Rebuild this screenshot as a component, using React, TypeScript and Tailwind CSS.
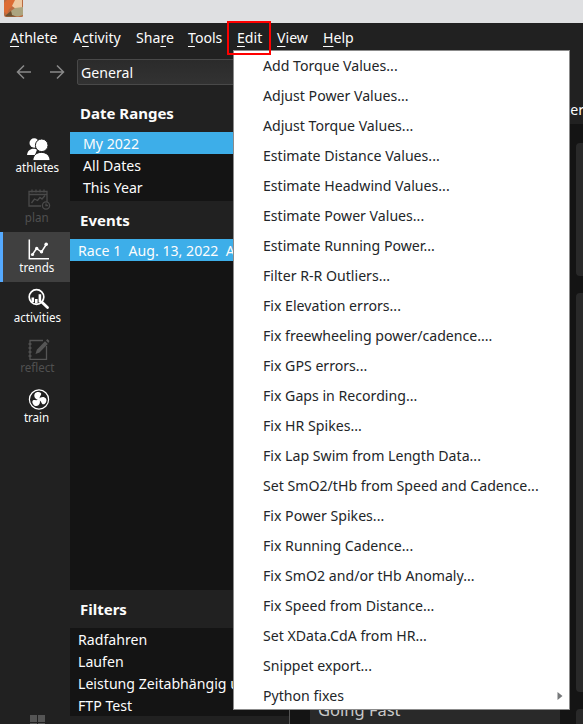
import React from "react";

const fixes = [
  "Add Torque Values...",
  "Adjust Power Values...",
  "Adjust Torque Values...",
  "Estimate Distance Values...",
  "Estimate Headwind Values...",
  "Estimate Power Values...",
  "Estimate Running Power...",
  "Filter R-R Outliers...",
  "Fix Elevation errors...",
  "Fix freewheeling power/cadence....",
  "Fix GPS errors...",
  "Fix Gaps in Recording...",
  "Fix HR Spikes...",
  "Fix Lap Swim from Length Data...",
  "Set SmO2/tHb from Speed and Cadence...",
  "Fix Power Spikes...",
  "Fix Running Cadence...",
  "Fix SmO2 and/or tHb Anomaly...",
  "Fix Speed from Distance...",
  "Set XData.CdA from HR...",
  "Snippet export...",
  "Python fixes",
];

// before, mnemonic, after
const menus: [string, string, string, string][] = [
  ["", "A", "thlete", "w-[63px]"],
  ["A", "c", "tivity", "w-[63px]"],
  ["Sha", "r", "e", "w-[52px]"],
  ["", "T", "ools", "w-[49px]"],
  ["", "E", "dit", "w-[40px]"],
  ["", "V", "iew", "w-[46px]"],
  ["", "H", "elp", "w-[40px]"],
];

function AthletesIcon() {
  return (
    <svg width="24" height="24" viewBox="0 0 24 24" fill="#fff">
      <circle cx="7.200" cy="6" r="4.700" />
      <path d="M0 18.100c.3-4 3-6.300 6.500-6.300 1.500 0 2.700.4 3.500 1L8 18.100z" />
      <g stroke="#212121" strokeWidth="1">
        <circle cx="14.700" cy="8.300" r="6.300" />
        <path d="M5.800 23.600c.2-5.200 3.600-8.200 8.600-8.200s8.500 3 8.700 8.200z" />
      </g>
    </svg>
  );
}

function PlanIcon() {
  return (
    <svg width="24" height="24" viewBox="0 0 24 24" fill="none" stroke="#4a4a4a" strokeWidth="1.300">
      <path d="M14 19H2V4.500h18V15M2 7.500h18M5 2.500v3M9 2.500v3M13 2.500v3M17 2.500v3" />
      <path d="M4.500 16l3-4 3 1.500 2.500-3 2 1.500 3-3.500" />
      <circle cx="19" cy="18.500" r="3.600" />
      <path d="M19 16.500v2h2" />
    </svg>
  );
}

function TrendsIcon() {
  return (
    <svg width="24" height="24" viewBox="0 0 24 24" fill="none" stroke="#fff" strokeWidth="1.500">
      <path d="M2.300 2.500v19.200H22" />
      <path d="M5.500 17.500l4-6 5 3.500 5-8" />
      <g fill="#fff" stroke="none">
        <circle cx="5.500" cy="17.500" r="1.600" />
        <circle cx="9.700" cy="11.500" r="1.700" />
        <circle cx="14.500" cy="14.800" r="1.700" />
        <circle cx="19.200" cy="7.300" r="1.800" />
      </g>
    </svg>
  );
}

function ActivitiesIcon() {
  return (
    <svg width="24" height="24" viewBox="0 0 24 24" fill="none" stroke="#fff">
      <circle cx="9.500" cy="10" r="7.300" strokeWidth="1.700" />
      <path d="M15 15.300l5.500 5.200" strokeWidth="2.800" strokeLinecap="round" />
      <path d="M5.800 15v-4.500M9.300 16.500v-4.500M12.900 15.500V7.300" strokeWidth="2.600" />
    </svg>
  );
}

function ReflectIcon() {
  return (
    <svg width="24" height="24" viewBox="0 0 24 24" fill="none" stroke="#555" strokeWidth="1.300">
      <path d="M16 3.500H3v18.800h16.500V9M1.500 7h3M1.500 11h3M1.500 15h3M1.500 19h3" />
      <path d="M8.500 17l1.300-4.200L18 4.300l2.800 2.700-8.300 8.500z" fill="#555" stroke="none" />
      <path d="M19 3.300l1.500-1.200 2 2L21.300 6z" fill="#555" stroke="none" />
    </svg>
  );
}

function TrainIcon() {
  const blade = "M12 12.500C8 12 6.600 8.800 7.600 6.500 8.700 4.400 12 4 13.600 5.300c1.200 1 .5 2.200-.3 3.200-.8 1.200-.8 2.300-.3 3.500z";
  return (
    <svg width="24" height="24" viewBox="0 0 24 24" fill="#fff">
      <circle cx="12" cy="12.500" r="9.600" fill="none" stroke="#fff" strokeWidth="1.200" />
      <g transform="translate(0 .5)">
        <path d={blade} />
        <path d={blade} transform="rotate(120 12 12)" />
        <path d={blade} transform="rotate(240 12 12)" />
      </g>
    </svg>
  );
}

function AppLogo() {
  return (
    <svg width="20" height="18" viewBox="0 0 20 18">
      <path d="M0 0h19v16q0 1-1.500 1H2Q0 17 0 15z" fill="#b96b41" />
      <path d="M3 0h8l-2 6-4 3-2 5-3-2V3z" fill="#dc6c35" />
      <path d="M11 0h7v8l-6 1-4-3z" fill="#eec9a2" />
      <path d="M7 11l4-3 8-1v8l-5 1.500-6-1z" fill="#aca47f" />
      <path d="M1 16c2-2 4-3 6-5l1 4 4 1.500H3z" fill="#6b5232" />
    </svg>
  );
}

function Arrow({ right = false }: { right?: boolean }) {
  return (
    <svg width="16" height="16" viewBox="0 0 16 16" fill="none" stroke="#898989" strokeWidth="1.500" className={right ? "rotate-180" : ""}>
      <path d="M15 8H2M8 1.500L1.500 8 8 14.500" />
    </svg>
  );
}

const views = [
  { name: "athletes", icon: <AthletesIcon /> },
  { name: "plan", icon: <PlanIcon />, dim: true },
  { name: "trends", icon: <TrendsIcon />, active: true },
  { name: "activities", icon: <ActivitiesIcon /> },
  { name: "reflect", icon: <ReflectIcon />, dim: true },
  { name: "train", icon: <TrainIcon /> },
];

function Heading({ children, className }: { children: React.ReactNode; className: string }) {
  return <h2 className={"shrink-0 bg-[#212121] pl-[10px] text-[15px] font-bold " + className}>{children}</h2>;
}

export default function App() {
  return (
    <div className="relative flex h-[724px] w-[583px] flex-col overflow-hidden bg-[#212121] font-['Noto_Sans',sans-serif] text-[14.13px] whitespace-nowrap text-[#fcfcfc]">
      <header className="h-[23px] shrink-0 bg-[#dfe0e2] pl-[4px]">
        <AppLogo />
      </header>

      <nav className="flex h-[28px] shrink-0 pl-[10px] leading-[30px]">
        {menus.map(([pre, key, post, width]) => (
          <span key={pre + key + post} className={"shrink-0 " + width}>
            {pre}
            <span className="underline decoration-1 underline-offset-[3px]">{key}</span>
            {post}
          </span>
        ))}
      </nav>

      <div className="flex h-[42px] shrink-0 items-center pl-[16px]">
        <Arrow />
        <span className="w-[17px]" />
        <Arrow right />
        <div className="ml-[12px] h-[26px] w-[220px] rounded-[2px] border border-[#494949] bg-linear-to-b from-[#2b2b2b] to-[#323232] pl-[3px] leading-[26px]">
          General
        </div>
      </div>

      <div className="flex min-h-0 flex-1">
        <aside className="flex w-[70px] shrink-0 flex-col pt-[39px]">
          {views.map((v) => (
            <div
              key={v.name}
              className={
                "flex h-[50px] shrink-0 flex-col items-center pt-[5px] leading-[14px] " +
                (v.active ? "border-l-[3px] border-[#55aaff] bg-[#404040] pl-px " : "pl-[4px] ") +
                (v.dim ? "text-[#505050]" : "")
              }
            >
              <span className="pl-[3px]">{v.icon}</span>
              <span className="origin-center scale-x-[0.935] text-[12.4px]">{v.name}</span>
            </div>
          ))}
          <div className="mt-auto ml-[30px] grid h-[9px] w-[15px] shrink-0 grid-cols-2 gap-px overflow-hidden">
            <i className="h-[7px] bg-[#555]" />
            <i className="h-[7px] bg-[#555]" />
            <i className="h-[7px] bg-[#555]" />
            <i className="h-[7px] bg-[#555]" />
          </div>
        </aside>

        <section className="flex w-[220px] shrink-0 flex-col overflow-hidden border-r border-[#555] bg-[#141414] leading-[24px]">
          <Heading className="h-[39px] leading-[40px]">Date Ranges</Heading>
          <ul className="h-[69px] shrink-0">
            <li className="h-[22px] bg-[#3daee9] pl-[13px]">My 2022</li>
            <li className="h-[22px] pl-[13px]">All Dates</li>
            <li className="h-[22px] pl-[13px]">This Year</li>
          </ul>
          <Heading className="h-[38px] leading-[38px]">Events</Heading>
          <div className="h-[351px] shrink-0">
            <p className="h-[22px] bg-[#3daee9] pl-[8px] whitespace-pre">Race 1  Aug. 13, 2022  A</p>
          </div>
          <Heading className="h-[38px] leading-[39px]">Filters</Heading>
          <ul className="h-[88px] shrink-0 pl-[8px]">
            <li className="h-[22px]">Radfahren</li>
            <li className="h-[22px]">Laufen</li>
            <li className="h-[22px]">Leistung Zeitabhängig und</li>
            <li className="h-[22px]">FTP Test</li>
          </ul>
          <div className="flex-1 bg-[#212121]" />
        </section>

        <main className="flex min-w-0 flex-1 flex-col bg-[#141414]">
          <div className="flex h-[31px] shrink-0 justify-end bg-[#212121] leading-[34px]">
            <span className="-mr-px">Filter</span>
          </div>
          <div className="flex min-h-0 flex-1 gap-[16px] overflow-hidden pt-[19px] pl-[20px]">
            <div className="flex w-[250px] shrink-0 flex-col justify-end bg-[#292929] pl-[8px] text-[16.5px] leading-[28px] text-[#c9c9c9]">
              Going Fast
            </div>
            <div className="flex w-[220px] shrink-0 flex-col gap-[17px]">
              <div className="h-[133px] shrink-0 rounded-[4px] bg-[#292929]" />
              <div className="h-[399px] shrink-0 rounded-[4px] bg-[#292929]" />
              <div className="h-[133px] shrink-0 rounded-[4px] bg-[#292929]" />
            </div>
          </div>
        </main>
      </div>

      <div className="absolute top-[50px] left-[233px] h-[660px] w-[337px] border border-[#8b8b8b] bg-white text-[#232629]">
        {fixes.map((name) => (
          <div key={name} className="flex h-[30px] items-center justify-between pr-[6px] pl-[29px]">
            {name}
            {name === "Python fixes" && (
              <svg width="6" height="8" viewBox="0 0 6 8">
                <path d="M0.500 0L5.500 4 .5 8z" fill="#77797b" />
              </svg>
            )}
          </div>
        ))}
      </div>
      <div className="absolute top-[21px] left-[227px] h-[34px] w-[44px] border-2 border-[#ff0000]" />
    </div>
  );
}
